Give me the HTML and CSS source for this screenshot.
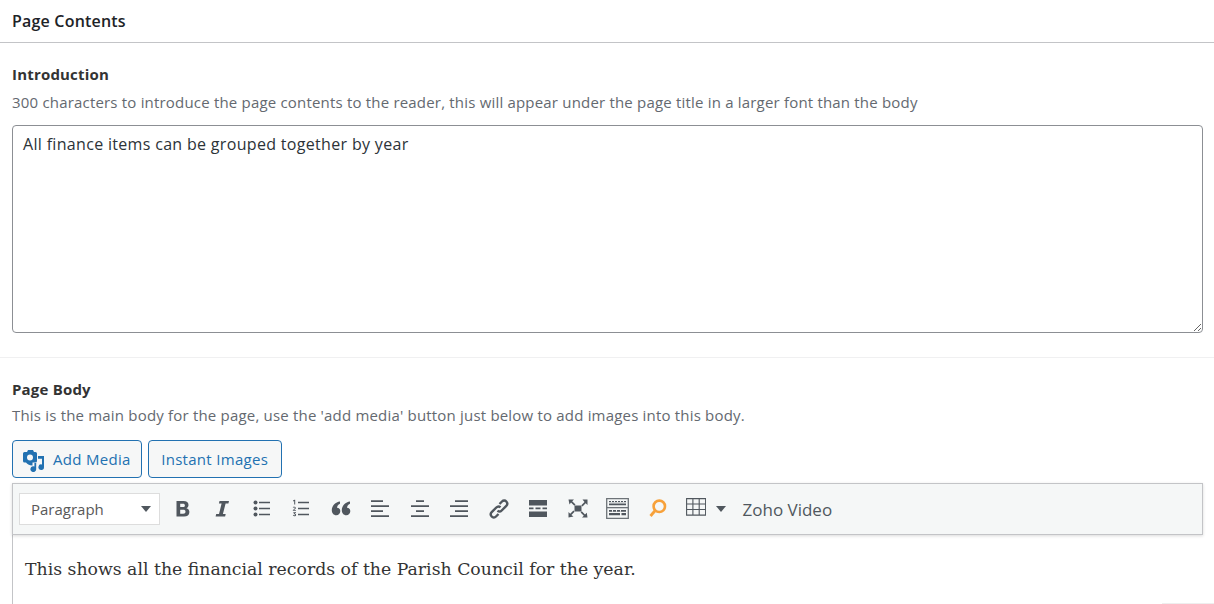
FILE: index.html

```html
<!DOCTYPE html>
<html lang="en">
<head>
    <meta charset="UTF-8">
    <meta name="viewport" content="width=device-width, initial-scale=1.0">
    <title>Page Contents</title>
    <link rel="stylesheet" href="styles.css">
</head>
<body>
    <div class="postbox-header">
        <h2>Page Contents</h2>
    </div>

    <div class="field field-intro">
        <div class="field-label">Introduction</div>
        <p class="field-desc">300 characters to introduce the page contents to the reader, this will appear under the page title in a larger font than the body</p>
        <textarea class="intro-input">All finance items can be grouped together by year</textarea>
    </div>

    <div class="field field-body">
        <div class="field-label">Page Body</div>
        <p class="field-desc">This is the main body for the page, use the 'add media' button just below to add images into this body.</p>

        <div class="media-buttons">
            <button class="wp-button">
                <svg class="media-icon" viewBox="0 0 22 22" width="22" height="22">
                    <path fill="#2271b1" fill-rule="evenodd" d="M1.500 2H4l1-2h5l1 2h1.500A1.500 1.500 0 0 1 14 3.500V11a1.500 1.500 0 0 1-1.500 1.500H9.500v3C6 15.500 4 14 3 12.500H1.500A1.500 1.500 0 0 1 0 11V3.500A1.500 1.500 0 0 1 1.500 2zM7 4.500a3 3 0 1 0 0 6 3 3 0 0 0 0-6z"/>
                    <path fill="#2271b1" d="M15 6h6v11.200a2.800 2.800 0 1 1-2-2.700V8.800h-4zM13.200 13v6.200a2.900 2.900 0 1 1-1.800-2.700V13z"/>
                </svg>
                Add Media
            </button>
            <button class="wp-button">Instant Images</button>
        </div>

        <div class="editor">
            <div class="toolbar">
                <div class="format-select">
                    <span>Paragraph</span>
                    <i class="caret"></i>
                </div>
                <div class="tool"><svg viewBox="0 0 20 20"><path d="M3.500 2h7c3.200 0 5 1.500 5 4 0 1.500-.8 2.700-2.100 3.200 1.800.4 3 1.800 3 3.700 0 3-2.100 4.600-5.300 4.600H3.500zM7.200 4.800v3.300h2.700c1.300 0 2-.6 2-1.700s-.7-1.600-2-1.600zm0 6v3.900h3c1.500 0 2.300-.7 2.300-2s-.8-1.900-2.300-1.900z"/></svg></div>
                <div class="tool"><svg viewBox="0 0 20 20"><path d="M7.500 2h9.500l-.6 2.600h-2.800L10.900 15h2.800l-.6 2.500H3.600l.6-2.500H7L9.600 4.600H6.900z"/></svg></div>
                <div class="tool"><svg viewBox="0 0 20 20"><circle cx="3.500" cy="3.500" r="2"/><circle cx="3.500" cy="9.500" r="2"/><circle cx="3.500" cy="15.500" r="2"/><path d="M7 2.800h11v1.500H7zM7 8.800h11v1.500H7zM7 14.800h11v1.500H7z"/></svg></div>
                <div class="tool"><svg viewBox="0 0 20 20"><path d="M7 2.800h11v1.500H7zM7 8.800h11v1.500H7zM7 14.800h11v1.500H7z"/><path d="M2 1.600l1.500-.8h.7v4.700h-1V1.900l-1 .5zM1.800 11.300c0-.2 2-1.500 2-2.300 0-.7-1.300-.5-1.800-.2l-.1-.8c1-.5 2.900-.5 2.900.9 0 1-1.200 1.600-1.700 2.100h1.800v.8H1.800zM2 13h2.900v.6l-1.200 1.100c.8 0 1.400.5 1.400 1.200 0 1.400-2 1.500-3.200.9l.2-.8c.7.400 2 .5 2-.2 0-.5-.7-.6-1.400-.6v-.6l1-1H2z"/></svg></div>
                <div class="tool"><svg viewBox="0 0 20 20"><path d="M9 2.500v2.200C7 5.700 6 7.200 6 8.700c2-.2 3.300 1.500 3.300 3.500 0 2.300-1.700 4-4 4C2.600 16.200.8 14 .8 11.200.8 6.700 4.500 3 9 2.500z"/><path d="M19 2.500v2.200c-2 1-3 2.500-3 4 2-.2 3.300 1.500 3.300 3.500 0 2.300-1.700 4-4 4-2.700 0-4.500-2.200-4.500-5C10.800 6.700 14.500 3 19 2.500z"/></svg></div>
                <div class="tool"><svg viewBox="0 0 20 20"><path d="M1 1.200h12v1.800H1zM1 6.200h18v1.800H1zM1 11.200h12v1.800H1zM1 16.200h18v1.800H1z"/></svg></div>
                <div class="tool"><svg viewBox="0 0 20 20"><path d="M6 1.200h8v1.800H6zM1 6.200h18v1.800H1zM6 11.200h8v1.800H6zM1 16.200h18v1.800H1z"/></svg></div>
                <div class="tool"><svg viewBox="0 0 20 20"><path d="M6 1.200h13v1.800H6zM1 6.200h18v1.800H1zM6 11.200h13v1.800H6zM1 16.200h18v1.800H1z"/></svg></div>
                <div class="tool"><svg viewBox="0 0 20 20"><path fill="none" stroke="#50575e" stroke-width="2.400" d="M10.500 5 13 2.500c1.400-1.400 3.200-1.200 4.300 0s1.400 2.900 0 4.300L12.700 11.500c-1.400 1.400-3.100 1.200-4.200.2M9.500 15 7 17.500c-1.400 1.400-3.200 1.200-4.300 0s-1.400-2.900 0-4.300L7.300 8.500c1.400-1.400 3.100-1.200 4.200-.2"/></svg></div>
                <div class="tool"><svg viewBox="0 0 20 20"><path d="M1 1h18v5.500H1zM1 12.500h18V18H1zM1 8.500h4.500v1.700H1zM7.500 8.500h5v1.700h-5zM14.500 8.500H19v1.700h-4.500z"/></svg></div>
                <div class="tool"><svg viewBox="0 0 20 20"><path d="M6.500 6.500h7v6h-7z"/><path d="M.5 .5H6L4.200 2.300l3.300 3.300-1.200 1.200L3 3.500 1.500 5.500zM19.500 .5V6l-1.800-1.800-3.200 3.200-1.200-1.200 3.200-3.200L14.500 .5zM.5 18.500V13l1.700 1.700 3.200-3.200 1.200 1.200-3.200 3.200L5.500 17.500zM19.500 18.500H14l1.800-1.800-3.200-3.200 1.200-1.200 3.200 3.200 1.800-1.800z"/></svg></div>
                <div class="tool tool-wide"><svg viewBox="0 0 23 21" width="23" height="21"><path fill="none" stroke="#6d7378" stroke-width="1.300" d="M.7.700h21.600v19.600H.7z"/><path fill="#6d7378" d="M1 9h21v1.300H1z"/><path fill="#50575e" d="M3 3h17v1.200H3zM3 5.500h17v1.800H3zM3 12h17v1.800H3zM3 15h11v2.200H3zM15.500 15h4.500v2.200h-4.500z"/><path fill="#f5f7f7" d="M5 3h1v1.200H5zM8 3h1v1.200H8zM11 3h1v1.200h-1zM14 3h1v1.200h-1zM17 3h1v1.200h-1zM6 12h1v1.800H6zM10 12h1v1.800h-1zM14 12h1v1.800h-1z"/></svg></div>
                <div class="tool"><svg viewBox="0 0 20 20" class="search-icon"><circle cx="12.300" cy="7.300" r="5.700" fill="none" stroke="#f7a13a" stroke-width="2.600"/><path fill="none" stroke="#f7a13a" stroke-width="2.800" d="M7.800 12 3.500 17"/></svg></div>
                <div class="tool tool-table">
                    <svg viewBox="0 0 20 20" width="20" height="20"><path fill="none" stroke="#50575e" stroke-width="1.100" d="M.6.600h19v16.500H.6zM.6 6h19M.6 11.500h19M6.900.600v16.500M13.200.600v16.500"/></svg>
                    <i class="caret"></i>
                </div>
                <div class="tool-text">Zoho Video</div>
            </div>
            <div class="editor-content">
                <p>This shows all the financial records of the Parish Council for the year.</p>
            </div>
        </div>
    </div>
    <div class="corner-line"></div>
</body>
</html>
```

FILE: styles.css

```css
html, body {
    height: 604px;
    overflow: hidden;
}
body {
    margin: 0;
    background: #fff;
    color: #3c434a;
    font-family: "Open Sans", "Noto Sans", sans-serif;
    font-size: 15px;
    letter-spacing: 0.19px;
}
button {
    font-family: inherit;
    letter-spacing: 0.3px;
}
.postbox-header {
    height: 42px;
    border-bottom: 1px solid #c3c4c7;
    display: flex;
    align-items: center;
    padding: 0 12px;
}
.postbox-header h2 {
    margin: 0;
    font-size: 16px;
    font-weight: 600;
    color: #1d2327;
    letter-spacing: 0.2px;
}
.field {
    padding: 0 11px 0 12px;
}
.field-intro {
    height: 315px;
    padding-top: 21px;
    box-sizing: border-box;
    border-bottom: 1px solid #f0f0f1;
}
.field-body {
    padding-top: 21px;
}
.field-label {
    font-weight: 700;
    line-height: 20px;
    color: #333;
}
.field-desc {
    margin: 8px 0 0;
    line-height: 20px;
    color: #646970;
}
.field-body .field-desc {
    margin-top: 6px;
}
.intro-input {
    display: block;
    box-sizing: border-box;
    width: 100%;
    height: 208px;
    margin-top: 13px;
    padding: 6px 10px;
    border: 1px solid #8c8f94;
    border-radius: 4px;
    color: #2c3338;
    font-family: inherit;
    font-size: 16px;
    letter-spacing: 0.32px;
    line-height: 24px;
    outline: none;
}
.media-buttons {
    display: flex;
    gap: 6px;
    margin-top: 15px;
}
.wp-button {
    display: flex;
    align-items: center;
    gap: 8px;
    height: 38px;
    padding: 0 12.500px;
    background: #f6f7f7;
    border: 1px solid #2271b1;
    border-radius: 4px;
    color: #2271b1;
    font-size: 15px;
}
.wp-button:first-child {
    padding: 0 10px;
}
.media-icon {
    margin-top: 3px;
}
.editor {
    height: 121px;
    border-left: 1px solid #c3c4c7;
    margin-top: 5px;
}
.toolbar {
    display: flex;
    align-items: center;
    height: 50px;
    padding-left: 6px;
    margin-left: -1px;
    background: #f5f7f7;
    border: 1px solid #c3c4c7;
    box-shadow: 0 1px 3px rgba(0, 0, 0, 0.15);
}
.format-select {
    display: flex;
    align-items: center;
    justify-content: space-between;
    box-sizing: border-box;
    width: 141px;
    height: 32px;
    padding: 0 8px 0 11px;
    margin-right: 3px;
    background: #fff;
    border: 1px solid #ddd;
    color: #595959;
    letter-spacing: 0;
}
.caret {
    width: 0;
    height: 0;
    border-left: 5px solid transparent;
    border-right: 5px solid transparent;
    border-top: 6px solid #50575e;
}
.tool {
    display: flex;
    align-items: center;
    justify-content: center;
    width: 39.500px;
    height: 32px;
}
.tool svg {
    width: 20px;
    height: 20px;
    margin-bottom: 1px;
    fill: #50575e;
}
.tool-wide svg {
    width: 23px;
    height: 21px;
}
.tool-table {
    width: auto;
    gap: 10px;
    margin: 0 17px 0 9px;
}
.tool-table svg {
    margin-bottom: 2px;
}
.tool-text {
    font-size: 17px;
    letter-spacing: 0;
    color: #50575e;
}
.editor-content {
    padding: 0 12px;
}
.editor-content p {
    margin: 22px 0 0;
    font-family: "DejaVu Serif", "Liberation Serif", serif;
    font-size: 17.300px;
    letter-spacing: 0;
    line-height: 24px;
    color: #333;
}
.corner-line {
    position: absolute;
    right: 0;
    bottom: 0;
    width: 52px;
    height: 1px;
    background: #eee;
}
```
